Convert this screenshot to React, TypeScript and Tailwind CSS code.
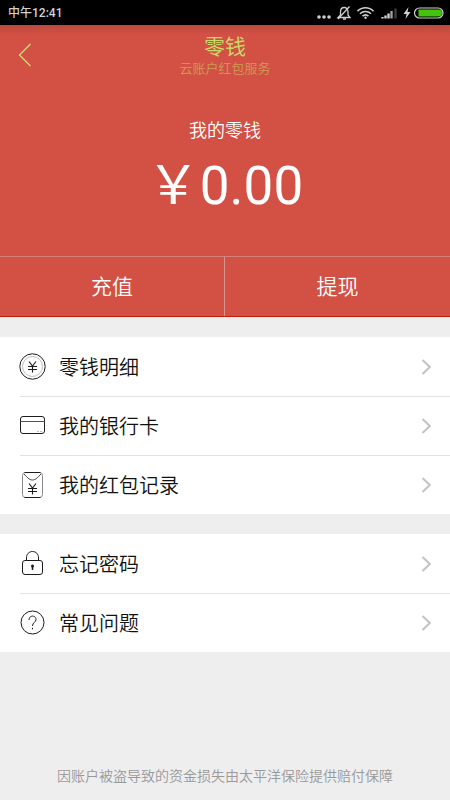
import type { ReactNode } from "react";

type Item = {
    id: string;
    label: string;
    icon: ReactNode;
};

const YuanMark = ({ y = 0 }: { y?: number }) => (
    <g transform={`translate(0 ${y})`} strokeWidth="1.1">
        <path d="M10 8.5 L13.5 13 L17 8.5 M13.5 13 V19.5" />
        <path d="M9 13.5 H18 M9 16.5 H18" />
    </g>
);

function ItemIcon({ children }: { children: ReactNode }) {
    return (
        <svg
            viewBox="0 0 27 27"
            className="w-[27px] h-[27px] shrink-0"
            fill="none"
            stroke="#1c1c1c"
            strokeWidth="1"
            aria-hidden="true"
        >
            {children}
        </svg>
    );
}

const walletItems: Item[] = [
    {
        id: "details",
        label: "零钱明细",
        icon: (
            <ItemIcon>
                <circle cx="13.5" cy="13.5" r="12.7" />
                <circle cx="13.5" cy="13.5" r="10" stroke="#bbb" />
                <YuanMark />
            </ItemIcon>
        ),
    },
    {
        id: "cards",
        label: "我的银行卡",
        icon: (
            <ItemIcon>
                <rect x="1.5" y="3.5" width="24" height="17" rx="2.5" />
                <path d="M1.5 8.5 H25.5" stroke="#555" />
                <path d="M18 18.5 H24" stroke="#bbb" strokeDasharray="2 1" />
            </ItemIcon>
        ),
    },
    {
        id: "packets",
        label: "我的红包记录",
        icon: (
            <ItemIcon>
                <rect x="3.5" y="0.5" width="20" height="25" rx="3" stroke="#888" />
                <path d="M5.5 0.5 H21.5 M5.5 25.5 H21.5" />
                <path d="M5 2 C8 5 10 8 13.5 8 C17 8 19 5 22 2" stroke="#444" />
                <YuanMark y={3} />
            </ItemIcon>
        ),
    },
];

const helpItems: Item[] = [
    {
        id: "password",
        label: "忘记密码",
        icon: (
            <ItemIcon>
                <rect x="3.5" y="10.5" width="20" height="14" rx="2.5" />
                <path d="M7.5 10.5 V8 C7.5 4 10 1.5 13.5 1.5 C17 1.5 19.5 4 19.5 8 V10.5" />
                <circle cx="13.5" cy="16" r="1.5" fill="#1c1c1c" stroke="none" />
                <path d="M13.5 16 V20" strokeWidth="1.5" />
            </ItemIcon>
        ),
    },
    {
        id: "faq",
        label: "常见问题",
        icon: (
            <ItemIcon>
                <circle cx="13.5" cy="12.5" r="11.5" />
                <path d="M10 10 C10 4.8 17 5 17 9.5 C17 12.3 13.5 12.5 13.5 16" />
                <path d="M13.5 17.8 V19.3" />
            </ItemIcon>
        ),
    },
];

function StatusBar() {
    return (
        <div className="flex h-[25px] items-center justify-between bg-black pl-2 pr-1.5 text-[#d0d0d0]">
            <span className="text-[12px] font-medium leading-4">中午12:41</span>
            <svg width="128" height="16" viewBox="0 0 128 16" fill="none" stroke="#d0d0d0" aria-hidden="true">
                {/* more notifications */}
                <g fill="#d0d0d0" stroke="none">
                    <circle cx="3" cy="12" r="1.8" />
                    <circle cx="8" cy="12" r="1.8" />
                    <circle cx="13" cy="12" r="1.8" />
                </g>
                {/* muted bell */}
                <path d="M22 12.5 H34 L32 10 V7 C32 1 24.5 1 24.5 7 V10 Z" strokeWidth="1.3" />
                <path d="M33.5 1.5 L22 14" strokeWidth="1.3" />
                <path d="M27 14 H30" strokeWidth="1.5" />
                {/* wifi */}
                <g strokeWidth="1.6">
                    <path d="M41.5 6.2 C46 1.6 53 1.6 57.5 6.2" />
                    <path d="M44 8.8 C47 5.8 52 5.8 55 8.8" />
                    <path d="M46.5 11.2 C48.5 9.4 50.5 9.4 52.5 11.2" />
                </g>
                <circle cx="49.5" cy="12.8" r="1.2" fill="#d0d0d0" stroke="none" />
                {/* signal */}
                <g strokeWidth="2.4">
                    <path d="M66.5 13.5 V12 M69.5 13.5 V10.5 M72.5 13.5 V8.5" />
                    <path d="M75.5 13.5 V6" stroke="#a0a0a0" />
                    <path d="M79.5 13.5 V3.5" stroke="#3d3d3d" />
                </g>
                {/* charging battery */}
                <path d="M92.5 2 L87.5 9 H90.5 L89.5 14 L94.5 7 H91.5 Z" fill="#d0d0d0" stroke="none" />
                <rect x="98.5" y="3" width="28.5" height="10" rx="5" strokeWidth="1.2" />
                <path d="M102.5 4.5 H122.5 A3.5 3.5 0 0 1 122.5 11.5 H102.5 Z" fill="#44c40c" stroke="none" />
            </svg>
        </div>
    );
}

function ItemList({ items }: { items: Item[] }) {
    return (
        <ul className="mt-5 bg-white">
            {items.map((item, i) => (
                <li key={item.id} className="flex h-[59px] flex-col">
                    {i > 0 && <div className="ml-5 h-px bg-[#e2e2e2]" />}
                    <a href={`#${item.id}`} className="flex flex-1 items-center pl-[19px] pr-[18px]">
                        {item.icon}
                        <span className="ml-[13px] flex-1 pt-0.5 text-[20px] leading-7 text-[#111]">{item.label}</span>
                        <svg width="11" height="18" viewBox="0 0 11 18" fill="none" stroke="#c2c3c6" strokeWidth="2" aria-hidden="true">
                            <path d="M1.5 2 L8.8 9 L1.5 16" />
                        </svg>
                    </a>
                </li>
            ))}
        </ul>
    );
}

export default function App() {
    return (
        <div className="flex min-h-screen flex-col bg-[#eeeeee] font-[Roboto,'Noto_Sans_CJK_SC',sans-serif] font-[350]">
            <StatusBar />

            <div className="bg-[#d25044] text-white">
                <div className="bg-linear-to-b from-[#bb493e] to-[#d25044] to-[9px]">
                    <header className="grid grid-cols-[60px_1fr_60px] items-center pt-2">
                        <button type="button" aria-label="返回" className="h-11 pl-[18px]">
                            <svg width="14" height="24" viewBox="0 0 14 24" fill="none" stroke="#d3dc72" strokeWidth="1.3" aria-hidden="true">
                                <path d="M12.5 1 L1.5 12 L12.5 23" />
                            </svg>
                        </button>
                        <div className="text-center">
                            <h1 className="text-[21px] font-normal leading-7 text-[#c9d867]">零钱</h1>
                            <p className="text-[13px] leading-4 text-[#d39a57]">云账户红包服务</p>
                        </div>
                    </header>
                </div>

                {/* Balance */}
                <div className="pb-[38px] pt-10 text-center">
                    <p className="text-[18px] leading-7">我的零钱</p>
                    <p className="mt-[9px] text-[53px] font-normal leading-[64px]">￥0.00</p>
                </div>

                <div className="grid grid-cols-2 border-b border-t border-b-[#cc1b09] border-t-[#d5827a]">
                    <button type="button" className="h-[59px] border-r border-[#d5948e] pt-0.5 text-[21px]">充值</button>
                    <button type="button" className="h-[59px] pt-0.5 text-[21px]">提现</button>
                </div>
            </div>

            <ItemList items={walletItems} />
            <ItemList items={helpItems} />

            <footer className="mt-auto px-4 pb-3 pt-6 text-center text-[14px] leading-6 text-[#999]">
                因账户被盗导致的资金损失由太平洋保险提供赔付保障
            </footer>
        </div>
    );
}
